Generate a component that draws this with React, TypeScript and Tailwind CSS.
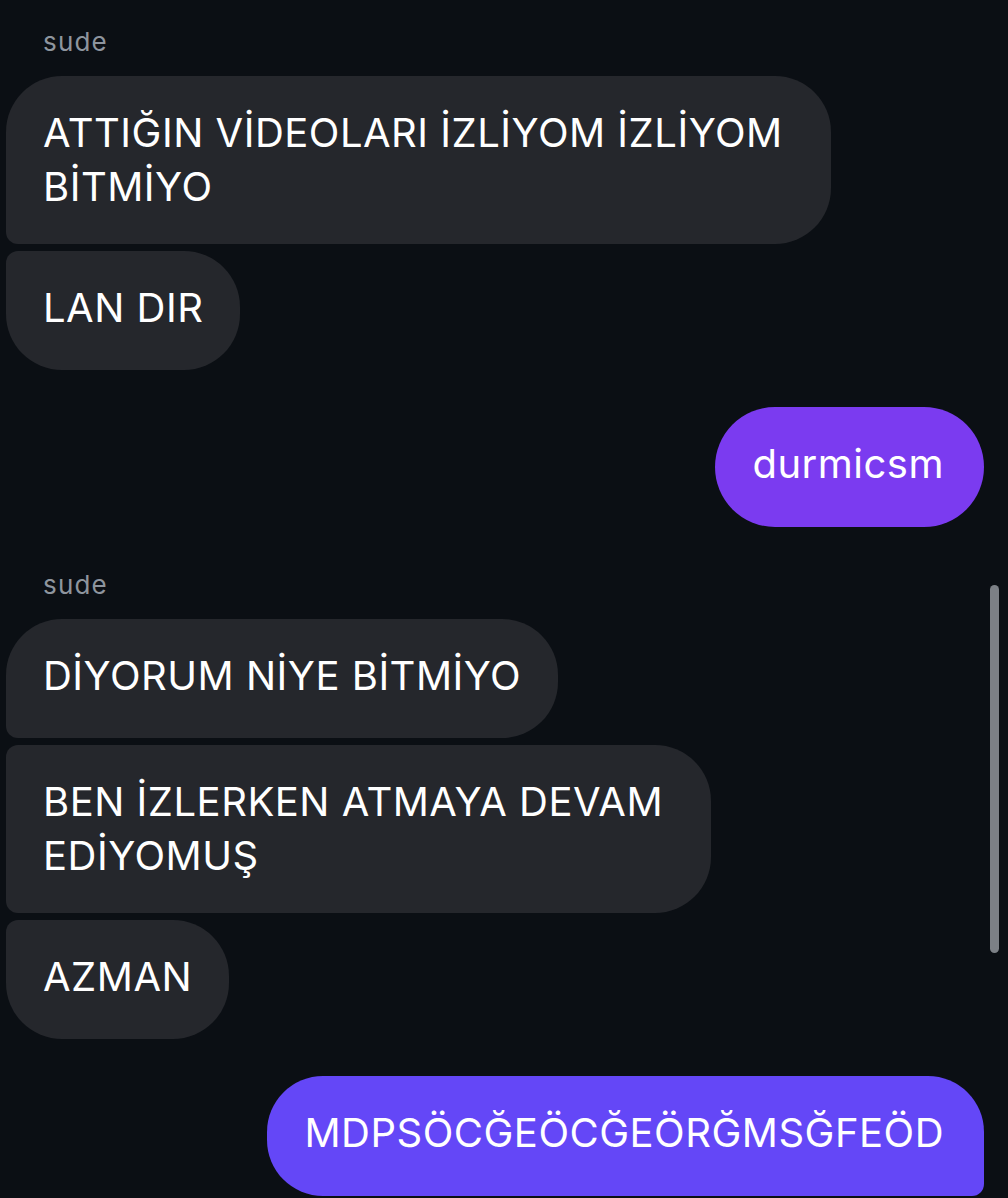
import React from "react";

type Pos = "first" | "middle" | "last" | "single";

// left side (incoming) corner shapes by position in the group
const leftCorners: Record<Pos, string> = {
  first: "rounded-tl-[56px] rounded-tr-[56px] rounded-br-[56px] rounded-bl-[12px]",
  middle: "rounded-tl-[12px] rounded-tr-[56px] rounded-br-[56px] rounded-bl-[12px]",
  last: "rounded-tl-[12px] rounded-tr-[56px] rounded-br-[56px] rounded-bl-[56px]",
  single: "rounded-[56px]",
};

const rightCorners: Record<Pos, string> = {
  first: "rounded-tl-[56px] rounded-tr-[56px] rounded-br-[12px] rounded-bl-[56px]",
  middle: "rounded-tl-[56px] rounded-tr-[12px] rounded-br-[12px] rounded-bl-[56px]",
  last: "rounded-tl-[56px] rounded-tr-[12px] rounded-br-[56px] rounded-bl-[56px]",
  single: "rounded-full",
};

const Incoming = ({ lines, pos }: { lines: string[]; pos: Pos }) => (
  <div
    className={`self-start min-h-[119px] py-[30px] pl-[37px] ${
      lines.length > 1 ? "pr-[48px]" : "pr-[37px]"
    } bg-[#25272c] text-white text-[40px] leading-[54px] tracking-[0.5px] whitespace-nowrap ${leftCorners[pos]}`}
  >
    {lines.map((l, i) => (
      <div key={i}>{l}</div>
    ))}
  </div>
);

const Outgoing = ({ text, pos, color }: { text: string; pos: Pos; color: string }) => (
  <div
    className={`self-end min-h-[120px] py-[30px] pl-[37px] pr-[40px] text-white text-[40px] leading-[54px] tracking-[0.5px] whitespace-nowrap ${color} ${rightCorners[pos]}`}
  >
    {text}
  </div>
);

const Sender = ({ name }: { name: string }) => (
  <div className="pl-[37px] text-[26px] leading-[32px] tracking-[1.2px] text-[#8e959e]">{name}</div>
);

export default function App() {
  return (
    <div
      className="relative h-[1198px] w-full overflow-hidden bg-[#0b0f14]"
      style={{ fontFamily: "Inter, 'Noto Sans', sans-serif" }}
    >
      <div className="flex flex-col pt-[26px] pl-[6px] pr-[24px]">
        <Sender name="sude" />
        <div className="mt-[18px] flex flex-col gap-[7px]">
          <Incoming pos="first" lines={["ATTIĞIN VİDEOLARI İZLİYOM İZLİYOM", "BİTMİYO"]} />
          <Incoming pos="last" lines={["LAN DIR"]} />
        </div>

        <div className="mt-[37px] flex flex-col">
          <Outgoing pos="single" text="durmicsm" color="bg-[#7b3bf0]" />
        </div>

        <div className="mt-[42px]">
          <Sender name="sude" />
        </div>
        <div className="mt-[18px] flex flex-col gap-[7px]">
          <Incoming pos="first" lines={["DİYORUM NİYE BİTMİYO"]} />
          <Incoming pos="middle" lines={["BEN İZLERKEN ATMAYA DEVAM", "EDİYOMUŞ"]} />
          <Incoming pos="last" lines={["AZMAN"]} />
        </div>

        <div className="mt-[37px] flex flex-col">
          <Outgoing pos="first" text="MDPSÖCĞEÖCĞEÖRĞMSĞFEÖD" color="bg-[#6447f7]" />
        </div>
      </div>

      {/* scroll indicator */}
      <div className="absolute left-[990px] top-[585px] h-[368px] w-[9px] rounded-full bg-[#7c8086]" />
    </div>
  );
}
